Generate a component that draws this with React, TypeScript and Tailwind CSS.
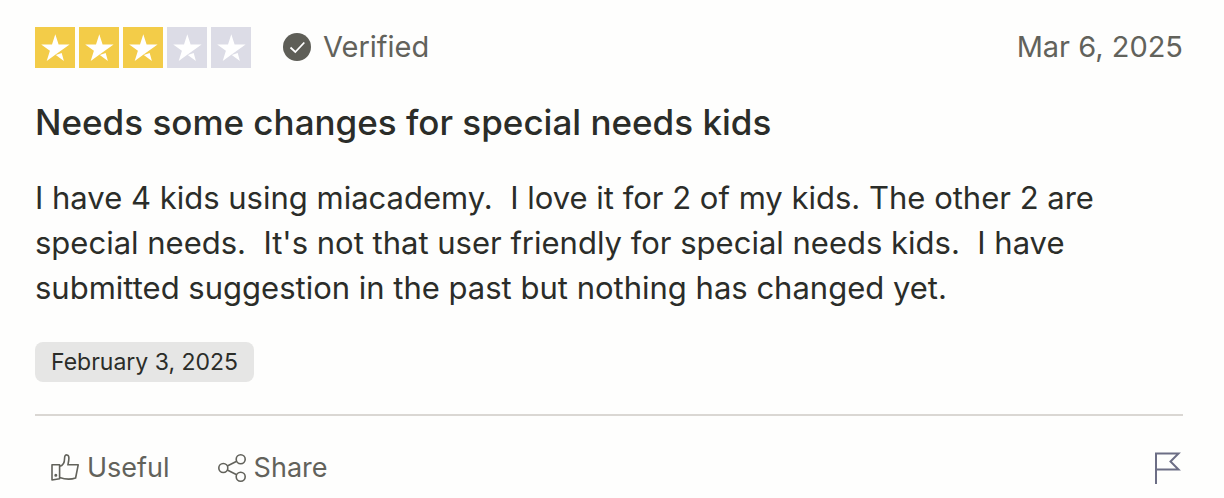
import React from 'react';
import { clsx } from 'clsx';

interface ReviewStarProps {
  filled: boolean;
}

const ReviewStar: React.FC<ReviewStarProps> = ({ filled }) => (
  <svg
    viewBox="0 0 40 41"
    aria-hidden="true"
    className={clsx('h-[41px] w-10', filled ? 'bg-[#f3cc48]' : 'bg-[#dcdce6]')}
  >
    <path
      fill="#fff"
      d="M20.3 7.3l3.3 10.3h11L19.9 28.1l-8.2 5.9 3.2-10.2L6.2 17.6h10.8zM20.8 27.9l5.9-1.9 2.2 8z"
    />
  </svg>
);

interface StarRatingProps {
  value: number;
}

const StarRating: React.FC<StarRatingProps> = ({ value }) => (
  <div role="img" aria-label={`Rated ${value} out of 5 stars`} className="flex gap-1">
    {[1, 2, 3, 4, 5].map((star) => (
      <ReviewStar key={star} filled={star <= value} />
    ))}
  </div>
);

const VerifiedIcon: React.FC = () => (
  <svg viewBox="0 0 28 28" aria-hidden="true" className="size-7">
    <circle cx="14" cy="14" r="14" fill="#5e5e57" />
    <path d="M7.5 14.5l4.8 4.5 9-9.5" fill="none" stroke="#fff" strokeWidth="1.8" />
  </svg>
);

const ThumbIcon: React.FC = () => (
  <svg
    viewBox="0 0 28 28"
    aria-hidden="true"
    fill="none"
    stroke="currentColor"
    strokeWidth="1.6"
    strokeLinejoin="round"
    className="size-7"
  >
    <path d="M1 10.8h7.6v14L1 26z" />
    <path d="M8.6 12.2c3-.4 5-3.7 5-8.2 0-4.4 4.3-3.8 4.3 0 0 2.8-.7 5.2-1 6.8h10.3l-2.6 13.2c-4.6 1.6-10.2 1.5-16-.4" />
    <circle cx="4.8" cy="21.3" r="0.7" fill="currentColor" />
  </svg>
);

const ShareIcon: React.FC = () => (
  <svg
    viewBox="0 0 28 28"
    aria-hidden="true"
    fill="none"
    stroke="currentColor"
    strokeWidth="1.6"
    className="size-7"
  >
    <circle cx="5.3" cy="14" r="4.5" />
    <circle cx="22.7" cy="5.3" r="4.5" />
    <circle cx="22.7" cy="22.7" r="4.5" />
    <path d="M9.3 12l9.4-4.7M9.3 16l9.4 4.7" />
  </svg>
);

const FlagIcon: React.FC = () => (
  <svg
    viewBox="0 0 28 32"
    aria-hidden="true"
    fill="none"
    stroke="currentColor"
    strokeWidth="2"
    className="h-8 w-7"
  >
    <path d="M1 32V1.5h22.5l-8 8 8 8H1" />
  </svg>
);

export default function App() {
  return (
    <article className="min-h-screen bg-[#fefefd] pt-[27px] pr-[41px] pl-[35px] font-['Inter',sans-serif] text-[#2b2d29]">
      <header className="flex items-start justify-between text-[29px] leading-10 text-[#62625b]">
        <div className="flex items-start gap-8">
          <StarRating value={3} />
          <div className="flex items-center gap-3">
            <VerifiedIcon />
            <span>Verified</span>
          </div>
        </div>
        <time dateTime="2025-03-06">Mar 6, 2025</time>
      </header>

      <h2 className="mt-8 text-[35px] leading-[45px] font-medium">
        Needs some changes for special needs kids
      </h2>
      <p className="mt-[30px] text-[31px] leading-[45px] whitespace-pre-line">
        {'I have 4 kids using miacademy. \u00a0I love it for 2 of my kids. The other 2 are\n'}
        {"special needs. \u00a0It's not that user friendly for special needs kids. \u00a0I have\n"}
        {'submitted suggestion in the past but nothing has changed yet.'}
      </p>

      <time
        dateTime="2025-02-03"
        className="mt-8 block w-fit rounded-lg bg-[#e6e6e5] px-4 text-[23px] leading-10"
      >
        February 3, 2025
      </time>

      <footer className="mt-8 flex items-start justify-between border-t-2 border-[#dad7d3] pt-8 text-[27px] leading-10 text-[#62625b]">
        <div className="flex gap-12 pl-4">
          <button type="button" className="flex items-center gap-2">
            <ThumbIcon />
            Useful
          </button>
          <button type="button" className="flex items-center gap-2">
            <ShareIcon />
            Share
          </button>
        </div>
        <button type="button" aria-label="Flag this review" className="mt-1 text-[#6c6e85]">
          <FlagIcon />
        </button>
      </footer>
    </article>
  );
}
